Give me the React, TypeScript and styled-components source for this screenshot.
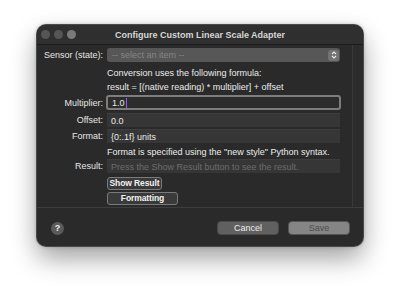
import React from 'react';
import styled, { createGlobalStyle } from 'styled-components';

const GlobalStyle = createGlobalStyle`
    html, body {
        margin: 0;
        padding: 0;
        background: #ffffff;
    }
    body {
        font-family: 'Liberation Sans', Arial, sans-serif;
        -webkit-font-smoothing: antialiased;
    }
`;

const App: React.FC = () => {
    return (
        <>
            <GlobalStyle />
            <Page>
                <Window>
                    <TitleBar>
                        <Lights>
                            <Light />
                            <Light />
                            <Light $active />
                        </Lights>
                        <Title>Configure Custom Linear Scale Adapter</Title>
                    </TitleBar>
                    <Body>
                        <Content>
                            <Row $mt={3}>
                                <Label>Sensor (state):</Label>
                                <Popup>
                                    <Placeholder>-- select an item --</Placeholder>
                                    <Stepper>
                                        <svg width="6" height="8" viewBox="0 0 6 8">
                                            <path d="M1 3 L3 1 L5 3 M1 5 L3 7 L5 5" fill="none" stroke="#e8e8e8" strokeWidth="1.1" />
                                        </svg>
                                    </Stepper>
                                </Popup>
                            </Row>
                            <Row $mt={5}>
                                <Label />
                                <Note>Conversion uses the following formula:</Note>
                            </Row>
                            <Row $mt={2}>
                                <Label />
                                <Note>result = [(native reading) * multiplier] + offset</Note>
                            </Row>
                            <Row $mt={2}>
                                <Label>Multiplier:</Label>
                                <Field $focused>
                                    1.0<Caret />
                                </Field>
                            </Row>
                            <Row $mt={3}>
                                <Label>Offset:</Label>
                                <Field>0.0</Field>
                            </Row>
                            <Row $mt={2}>
                                <Label>Format:</Label>
                                <Field>{'{0:.1f} units'}</Field>
                            </Row>
                            <Row $mt={3}>
                                <Label />
                                <Note>Format is specified using the "new style" Python syntax.</Note>
                            </Row>
                            <Row $mt={1}>
                                <Label>Result:</Label>
                                <Field $muted>Press the Show Result button to see the result.</Field>
                            </Row>
                            <Row $mt={4}>
                                <Label />
                                <SmallButton $width={55}>Show Result</SmallButton>
                            </Row>
                            <Row $mt={2}>
                                <Label />
                                <SmallButton $width={71}>Formatting</SmallButton>
                            </Row>
                        </Content>
                        <SideStrip />
                    </Body>
                    <Footer>
                        <HelpButton>?</HelpButton>
                        <FooterButtons>
                            <DialogButton>Cancel</DialogButton>
                            <DialogButton $disabled>Save</DialogButton>
                        </FooterButtons>
                    </Footer>
                </Window>
            </Page>
        </>
    );
};

const Page = styled.div`
    padding: 25px 37px 40px;
    width: 326px;
`;

const Window = styled.div`
    width: 326px;
    background: #2a2a2a;
    border-radius: 9px;
    box-shadow: 0 0 0 1px #4a4a4a, 0 12px 26px rgba(0, 0, 0, 0.38), 0 0 4px rgba(0, 0, 0, 0.3);
    overflow: hidden;
    color: #e4e4e4;
    font-size: 9px;
`;

const TitleBar = styled.div`
    position: relative;
    height: 19px;
    display: flex;
    align-items: center;
    justify-content: center;
    background: #2f2f2f;
    border-bottom: 1px solid #1c1c1c;
`;

const Lights = styled.div`
    position: absolute;
    left: 4px;
    top: 5px;
    display: flex;
    gap: 4px;
`;

const Light = styled.span<{ $active?: boolean }>`
    width: 9px;
    height: 9px;
    border-radius: 50%;
    background: ${(p) => (p.$active ? '#7a7a7a' : '#555555')};
`;

const Title = styled.span`
    font-weight: 700;
    font-size: 9px;
    color: #d6d6d6;
    margin-top: 1px;
`;

const Body = styled.div`
    display: flex;
    height: 162px;
    border-bottom: 1px solid #3d3d3d;
`;

const Content = styled.div`
    width: 315px;
    border-right: 1px solid #3a3a3a;
    display: flex;
    flex-direction: column;
`;

const SideStrip = styled.div`
    flex: 1;
    background: #2c2c2c;
`;

const Row = styled.div<{ $mt: number }>`
    display: flex;
    align-items: center;
    margin-top: ${(p) => p.$mt}px;
`;

const Label = styled.span`
    width: 66px;
    flex: none;
    text-align: right;
    padding-right: 4px;
    color: #e6e6e6;
    white-space: nowrap;
`;

const Popup = styled.div`
    width: 233px;
    height: 14px;
    background: #575757;
    border-radius: 3px;
    display: flex;
    align-items: center;
    justify-content: space-between;
    padding: 0 1px 0 5px;
    box-sizing: border-box;
`;

const Placeholder = styled.span`
    color: #858585;
`;

const Stepper = styled.span`
    width: 11px;
    height: 11px;
    border-radius: 3px;
    background: #737373;
    display: flex;
    align-items: center;
    justify-content: center;
`;

const Note = styled.span`
    line-height: 12px;
    color: #ececec;
    white-space: nowrap;
`;

const Field = styled.div<{ $focused?: boolean; $muted?: boolean }>`
    box-sizing: border-box;
    width: ${(p) => (p.$focused ? 235 : 233)}px;
    height: ${(p) => (p.$focused ? 15 : 14)}px;
    margin-left: ${(p) => (p.$focused ? -1 : 0)}px;
    display: flex;
    align-items: center;
    padding-left: 4px;
    background: ${(p) => (p.$focused ? '#2c2c2c' : '#363636')};
    border: ${(p) => (p.$focused ? '2px solid #7d7d7d' : 'none')};
    border-top: ${(p) => (p.$focused ? '2px solid #7d7d7d' : '1px solid #3e3e3e')};
    border-radius: ${(p) => (p.$focused ? 3 : 0)}px;
    color: ${(p) => (p.$muted ? '#6c6c6c' : '#e8e8e8')};
    white-space: nowrap;
`;

const Caret = styled.span`
    width: 1px;
    height: 10px;
    margin-left: 1px;
    background: #8b5cf6;
`;

const SmallButton = styled.button<{ $width: number }>`
    width: ${(p) => p.$width}px;
    height: 13px;
    padding: 0;
    background: #3a3a3a;
    border: 1px solid #7a7a7a;
    border-radius: 3px;
    color: #f2f2f2;
    font-family: 'Liberation Sans', Arial, sans-serif;
    font-size: 8.5px;
    font-weight: 700;
    letter-spacing: -0.1px;
    line-height: 11px;
    text-align: center;
    white-space: nowrap;
`;

const Footer = styled.div`
    height: 38px;
    display: flex;
    align-items: center;
    justify-content: space-between;
    padding: 0 13px 0 14px;
    box-sizing: border-box;
`;

const HelpButton = styled.span`
    flex: none;
    width: 13px;
    height: 13px;
    border-radius: 50%;
    background: #5b5b5b;
    color: #f0f0f0;
    font-size: 9px;
    font-weight: 700;
    line-height: 13px;
    text-align: center;
    margin-top: 2px;
`;

const FooterButtons = styled.div`
    display: flex;
    gap: 9px;
    margin-top: 2px;
`;

const DialogButton = styled.button<{ $disabled?: boolean }>`
    width: 62px;
    height: 14px;
    padding: 0;
    border-radius: 4px;
    border: 1px solid ${(p) => (p.$disabled ? '#545454' : '#4a4a4a')};
    background: ${(p) => (p.$disabled ? '#858585' : '#606060')};
    color: ${(p) => (p.$disabled ? '#505050' : '#eeeeee')};
    font-family: 'Liberation Sans', Arial, sans-serif;
    font-size: 9px;
    line-height: 12px;
    text-align: center;
`;

export default App;
